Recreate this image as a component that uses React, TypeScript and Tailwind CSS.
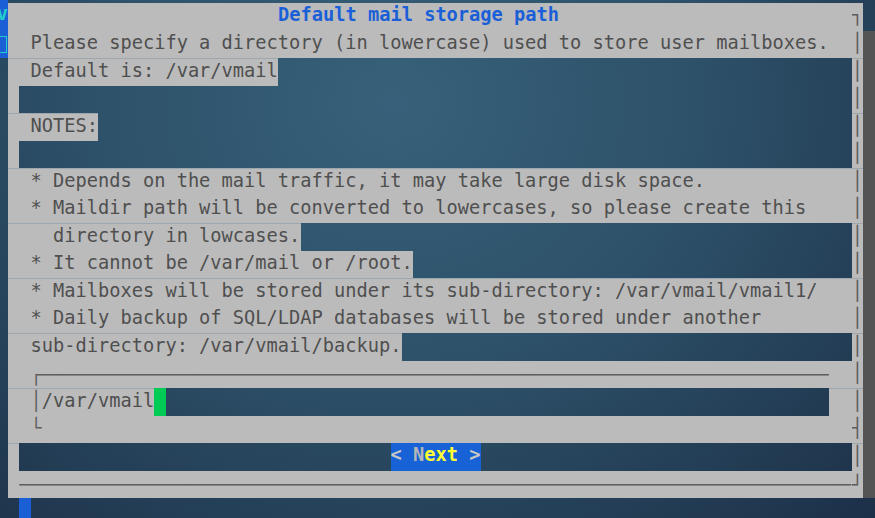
import React from "react";

// one terminal cell
const CW = 11.25;

type Kind = "g" | "b" | "btn" | "cur" | "blue";
type Seg = { n: number; k: Kind; t?: React.ReactNode; c?: string };
type Row = { left?: "v" | "box"; shadow: boolean; line?: boolean; segs: Seg[] };

const g = (n: number, t: React.ReactNode = "", c = "text-[#4f4f4f]"): Seg => ({ n, k: "g", t, c });
const b = (n: number): Seg => ({ n, k: "b" });
const edge = (ch = "│") => g(1, ch, "text-[#5a5a5a]");

const nextBtn = (
  <span className="font-bold">
    <span className="text-[#c6c6c6]">&lt;</span> <span className="text-[#b6b6b6]">N</span>
    <span className="text-[#ffff33]">ext</span> <span className="text-[#c6c6c6]">&gt;</span>
  </span>
);

const rows: Row[] = [
  {
    left: "v",
    shadow: false,
    segs: [g(24), g(25, "Default mail storage path", "font-bold text-[#1a5fd8]"), g(26), edge("┐")],
  },
  {
    left: "box",
    shadow: true,
    segs: [g(2), g(71, "Please specify a directory (in lowercase) used to store user mailboxes."), g(2), edge()],
  },
  { shadow: true, line: true, segs: [g(2), g(22, "Default is: /var/vmail"), b(51), edge()] },
  { shadow: true, segs: [g(1), b(74), edge()] },
  { shadow: true, line: true, segs: [g(2), g(6, "NOTES:"), b(67), edge()] },
  { shadow: true, segs: [g(1), b(74), edge()] },
  {
    shadow: true,
    line: true,
    segs: [g(2), g(60, "* Depends on the mail traffic, it may take large disk space."), g(13), edge()],
  },
  {
    shadow: true,
    segs: [g(2), g(69, "* Maildir path will be converted to lowercases, so please create this"), g(4), edge()],
  },
  { shadow: true, line: true, segs: [g(2), g(24, "  directory in lowcases."), b(49), edge()] },
  { shadow: true, segs: [g(2), g(34, "* It cannot be /var/mail or /root."), b(39), edge()] },
  {
    shadow: true,
    line: true,
    segs: [g(2), g(70, "* Mailboxes will be stored under its sub-directory: /var/vmail/vmail1/"), g(3), edge()],
  },
  {
    shadow: true,
    segs: [g(2), g(65, "* Daily backup of SQL/LDAP databases will be stored under another"), g(8), edge()],
  },
  { shadow: true, line: true, segs: [g(2), g(33, "sub-directory: /var/vmail/backup."), b(40), edge()] },
  {
    shadow: true,
    segs: [g(2), g(71, "┌" + "─".repeat(70), "text-[#5e5e5e] leading-[27.5px]"), g(2), edge()],
  },
  {
    shadow: true,
    line: true,
    segs: [g(2), g(1, "│", "text-[#5e5e5e]"), g(10, "/var/vmail"), { n: 1, k: "cur" }, b(59), g(2), edge()],
  },
  { shadow: true, segs: [g(2), g(1, "└", "text-[#5e5e5e]"), g(72), edge("┤")] },
  { shadow: true, line: true, segs: [g(1), b(33), { n: 8, k: "btn", t: nextBtn }, b(33), edge()] },
  {
    shadow: true,
    segs: [g(1), g(74, "─".repeat(74), "text-[#5e5e5e] leading-[28px]"), g(1, "┘", "text-[#5a5a5a] leading-[28px]")],
  },
  { shadow: false, segs: [b(1), { n: 1, k: "blue" }, b(74)] },
];

const kindCls: Record<Kind, string> = {
  g: "bg-[#bbbbbb]",
  b: "",
  btn: "bg-[#1762d6]",
  cur: "bg-[#00cc55]",
  blue: "bg-[#1a5fd6]",
};

function LeftCell({ kind }: { kind?: "v" | "box" }) {
  if (kind === "v")
    return (
      <div className="w-[8px] shrink-0 overflow-hidden bg-[#1a5fd6] mt-[-3px] h-[30.5px] pt-[2px]">
        <span className="block w-[11.25px] ml-[-3.25px] text-center font-bold text-[#22cccc]">v</span>
      </div>
    );
  if (kind === "box")
    return (
      <div className="w-[8px] shrink-0 overflow-hidden bg-[#1a5fd6] flex items-center">
        <span className="block w-[11px] h-[17px] ml-[-4px] border border-[#22cccc]" />
      </div>
    );
  return <div className="w-[8px] shrink-0" />;
}

export default function App() {
  return (
    <div className="w-[875px] h-[518px] overflow-hidden pt-[3px] bg-[radial-gradient(ellipse_at_45%_20%,#37617a_0%,#2d5169_45%,#1c3048_100%)] font-['DejaVu_Sans_Mono',monospace] text-[18.68px] leading-[24.5px]">
      {rows.map((row, i) => (
        <div key={i} className="flex h-[27.5px]">
          <LeftCell kind={row.left} />
          {row.segs.map((s, j) => (
            <div
              key={j}
              style={{ width: s.n * CW }}
              className={`shrink-0 h-full overflow-hidden whitespace-pre ${kindCls[s.k]} ${s.c ?? ""} ${
                row.line && s.k === "g" ? "border-t border-[#9fa7ae] leading-[23.5px]" : ""
              }`}
            >
              {s.t}
            </div>
          ))}
          <div className={`w-[12px] shrink-0 ${row.shadow ? "bg-[#545454]" : ""}`} />
        </div>
      ))}
    </div>
  );
}
